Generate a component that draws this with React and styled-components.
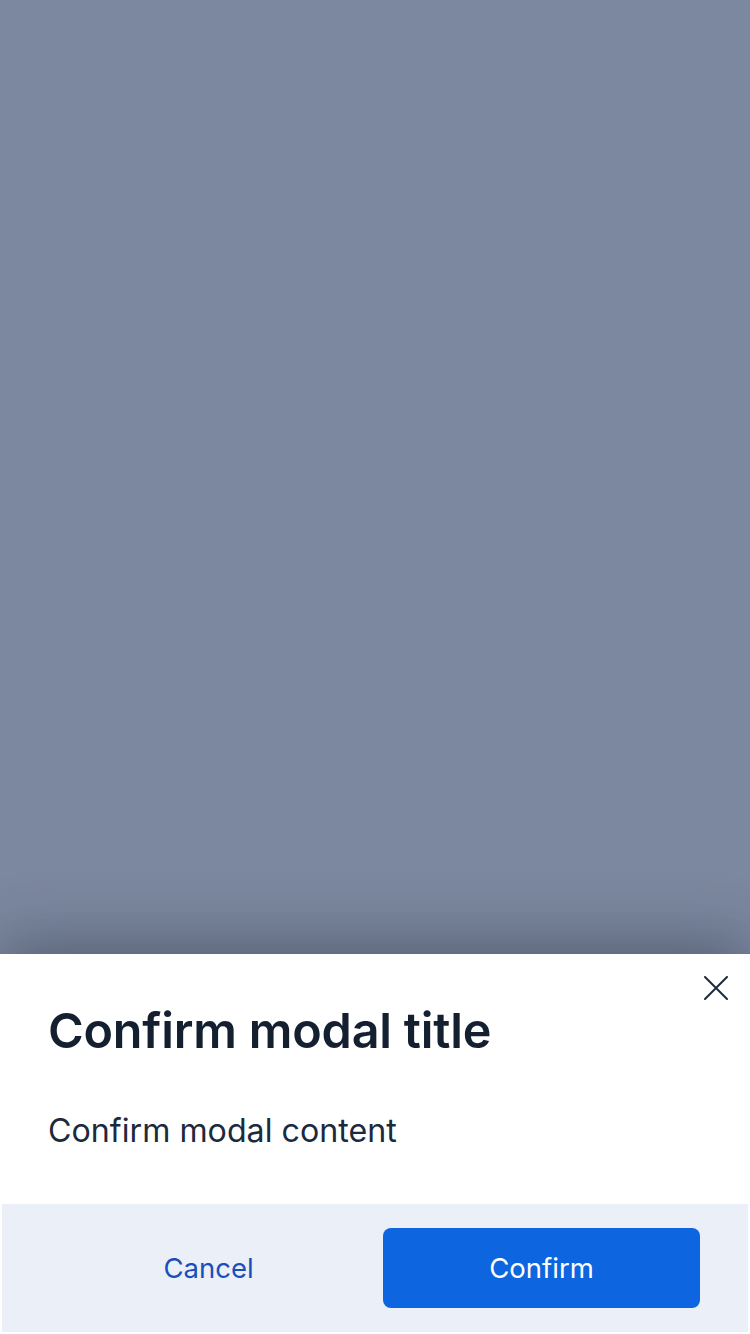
import React from 'react';
import styled, { createGlobalStyle } from 'styled-components';

const GlobalStyle = createGlobalStyle`
  html, body {
    margin: 0;
    padding: 0;
    height: 100%;
  }
  body {
    font-family: Inter, "Noto Sans", sans-serif;
    -webkit-font-smoothing: antialiased;
  }
  #root {
    height: 100%;
  }
`;

const Page = styled.div`
  display: flex;
  flex-direction: column;
  height: 1334px;
  overflow: hidden;
  background-color: #7c889f;
`;

const Backdrop = styled.div`
  flex: 1;
`;

const Sheet = styled.div`
  position: relative;
  display: flex;
  flex-direction: column;
  padding: 0 2px 2px;
  background-color: #fff;
  box-shadow: 0 -8px 60px rgba(30, 40, 60, 0.45);
`;

const CloseButton = styled.button`
  position: absolute;
  top: 14px;
  right: 14px;
  width: 40px;
  height: 40px;
  display: flex;
  align-items: center;
  justify-content: center;
  padding: 0;
  border: none;
  background: none;
  color: #1f2b3e;
  cursor: pointer;
`;

const Body = styled.div`
  display: flex;
  flex-direction: column;
  padding: 48px 46px 53px;
  gap: 51px;
`;

const Title = styled.h2`
  margin: 0;
  font-size: 48.5px;
  line-height: 58px;
  font-weight: 600;
  color: #141f30;
  letter-spacing: -0.2px;
`;

const Content = styled.p`
  margin: 0;
  font-size: 32.2px;
  line-height: 40px;
  font-weight: 400;
  color: #1c2a3e;
`;

const Footer = styled.div`
  display: grid;
  grid-template-columns: 1fr 1fr;
  gap: 16px;
  padding: 24px 48px;
  background-color: #ebeff7;
`;

const ActionButton = styled.button`
  height: 80px;
  border: none;
  border-radius: 8px;
  font-family: Inter, "Noto Sans", sans-serif;
  font-size: 27.5px;
  font-weight: 400;
  cursor: pointer;
  background-color: ${(p) => (p.$primary ? '#0d65e0' : 'transparent')};
  color: ${(p) => (p.$primary ? '#fff' : '#1a4fbb')};
`;

function CloseIcon() {
  return (
    <svg width="24" height="24" viewBox="0 0 24 24" fill="none">
      <path d="M1 1L23 23M23 1L1 23" stroke="currentColor" strokeWidth="2" strokeLinecap="round" />
    </svg>
  );
}

export default function App() {
  return (
    <>
      <GlobalStyle />
      <Page>
        <Backdrop />
        <Sheet>
          <CloseButton aria-label="Close">
            <CloseIcon />
          </CloseButton>
          <Body>
            <Title>Confirm modal title</Title>
            <Content>Confirm modal content</Content>
          </Body>
          <Footer>
            <ActionButton>Cancel</ActionButton>
            <ActionButton $primary>Confirm</ActionButton>
          </Footer>
        </Sheet>
      </Page>
    </>
  );
}
